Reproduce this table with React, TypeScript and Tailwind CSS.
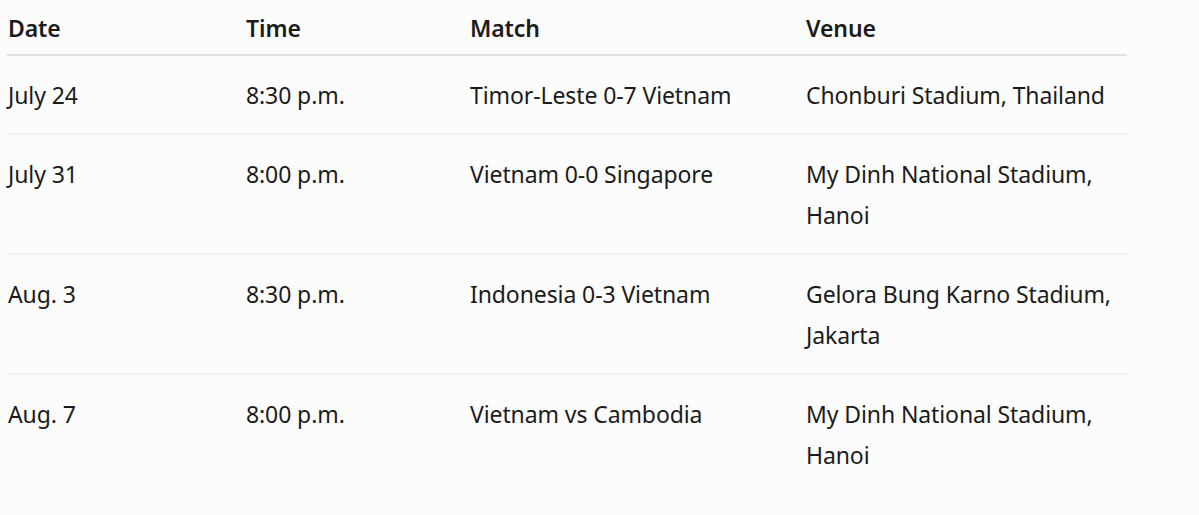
const rows = [
  { date: "July 24", time: "8:30 p.m.", match: "Timor-Leste 0-7 Vietnam", venue: "Chonburi Stadium, Thailand" },
  { date: "July 31", time: "8:00 p.m.", match: "Vietnam 0-0 Singapore", venue: "My Dinh National Stadium, Hanoi" },
  { date: "Aug. 3", time: "8:30 p.m.", match: "Indonesia 0-3 Vietnam", venue: "Gelora Bung Karno Stadium, Jakarta" },
  { date: "Aug. 7", time: "8:00 p.m.", match: "Vietnam vs Cambodia", venue: "My Dinh National Stadium, Hanoi" },
];

export default function App() {
  return (
    <div className="min-h-screen bg-[#fcfcfc] text-[#1b1b1b] font-['Noto_Sans','Open_Sans',sans-serif]">
      {/* Fixtures table */}
      <table className="ml-[7px] w-[1120px] table-fixed border-collapse text-left text-[23px] leading-[41px] tracking-[-0.1px]">
        <colgroup>
          <col className="w-[239px]" />
          <col className="w-[224px]" />
          <col className="w-[336px]" />
          <col className="w-[321px]" />
        </colgroup>
        <thead>
          <tr className="border-b-2 border-[#e2e2e2]">
            <th className="pt-[8px] pb-[5px] pl-[1px] font-semibold">Date</th>
            <th className="pt-[8px] pb-[5px] font-semibold">Time</th>
            <th className="pt-[8px] pb-[5px] font-semibold">Match</th>
            <th className="pt-[8px] pb-[5px] font-semibold">Venue</th>
          </tr>
        </thead>
        <tbody>
          {rows.map((r, i) => (
            <tr key={i} className="border-b-2 border-[#f1f1f1] last:border-0 align-top">
              <td className="pt-[19px] pb-[17px] pl-[1px]">{r.date}</td>
              <td className="pt-[19px] pb-[17px]">{r.time}</td>
              <td className="pt-[19px] pb-[17px]">{r.match}</td>
              <td className="pt-[19px] pb-[17px]">{r.venue}</td>
            </tr>
          ))}
        </tbody>
      </table>
    </div>
  );
}
